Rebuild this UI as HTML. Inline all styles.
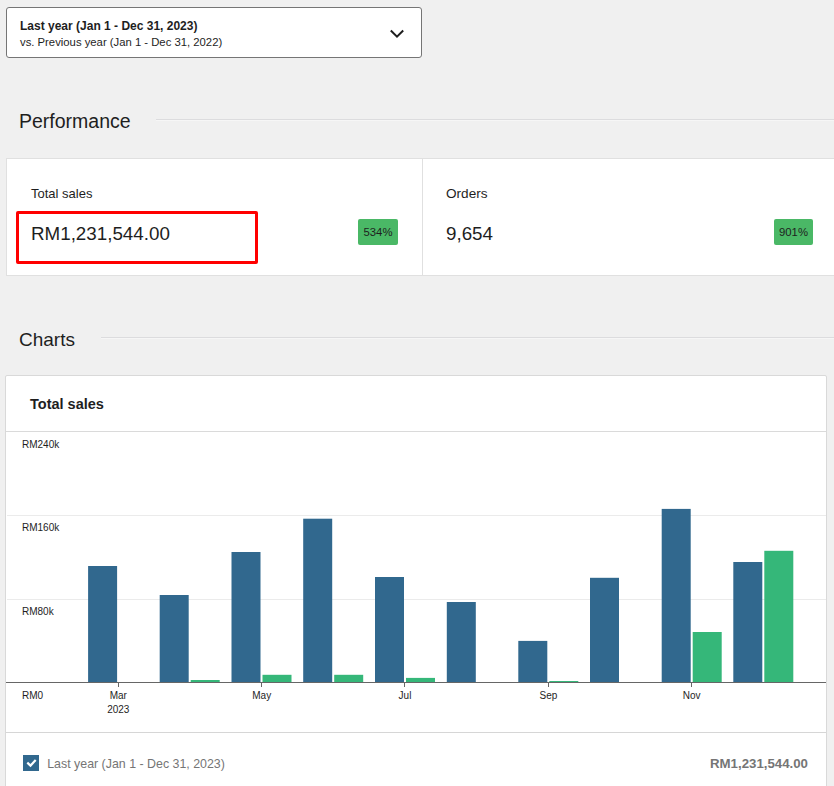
<!DOCTYPE html>
<html><head><meta charset="utf-8">
<style>
html,body{margin:0;padding:0;}
body{width:834px;height:786px;overflow:hidden;background:#f0f0f0;position:relative;font-family:"Liberation Sans",sans-serif;color:#1e1e1e;}
.abs{position:absolute;white-space:nowrap;}
#dd{left:6px;top:7px;width:414px;height:49px;border:1px solid #757575;border-radius:3px;background:#fff;}
.sec{font-size:19px;}
.hr{position:absolute;height:1px;background:#dcdcde;box-shadow:0 1px 0 #f6f6f6;}
#perf{left:6px;top:158px;width:900px;height:116px;border:1px solid #e0e0e0;background:#fff;}
.badge{position:absolute;background:#4ab866;border-radius:2px;height:26px;font-size:11.3px;line-height:27px;text-align:center;color:#1e1e1e;}
#chart{left:5px;top:375px;width:820px;height:500px;border:1px solid #d9d9d9;border-radius:2px;background:#fff;}
.ax{font-size:10px;fill:#1e1e1e;font-family:"Liberation Sans",sans-serif;}
</style></head>
<body>
<div class="abs" id="dd"></div>
<div class="abs" style="left:20px;top:19px;font-size:12px;font-weight:700;">Last year (Jan 1 - Dec 31, 2023)</div>
<div class="abs" style="left:20px;top:35.5px;font-size:11.3px;">vs. Previous year (Jan 1 - Dec 31, 2022)</div>
<svg class="abs" style="left:0;top:0" width="834" height="786">
</svg>
<svg class="abs" style="left:388px;top:26px" width="18" height="14"><path d="M2.8 4.5 L9 10.6 L15.2 4.5" fill="none" stroke="#1e1e1e" stroke-width="2"/></svg>

<div class="abs sec" style="left:19px;top:109.8px;font-size:19.5px;">Performance</div>
<div class="hr" style="left:156px;top:119px;width:700px;"></div>

<div class="abs" id="perf"></div>
<div class="abs" style="left:422px;top:159px;width:1px;height:116px;background:#e0e0e0;"></div>
<div class="abs" style="left:31px;top:185.7px;font-size:13px;">Total sales</div>
<div class="abs" style="left:31px;top:223px;font-size:18.8px;">RM1,231,544.00</div>
<div class="badge" style="left:358px;top:219px;width:40px;">534%</div>
<div class="abs" style="left:16px;top:211px;width:236px;height:47px;border:3px solid #ff0000;border-radius:2px;"></div>
<div class="abs" style="left:446px;top:185.7px;font-size:13.6px;">Orders</div>
<div class="abs" style="left:446px;top:223px;font-size:18.8px;">9,654</div>
<div class="badge" style="left:774px;top:219px;width:39px;">901%</div>

<div class="abs sec" style="left:19px;top:328.5px;">Charts</div>
<div class="hr" style="left:101px;top:337px;width:800px;"></div>

<div class="abs" id="chart"></div>
<div class="abs" style="left:30px;top:395.5px;font-size:14.5px;font-weight:700;">Total sales</div>
<div class="abs" style="left:6px;top:431px;width:820px;height:1px;background:#dadada;"></div>
<svg class="abs" style="left:0;top:0" width="834" height="786">
  <line x1="7" y1="515.5" x2="826" y2="515.5" stroke="#ebebeb"/>
  <line x1="7" y1="599.5" x2="826" y2="599.5" stroke="#ebebeb"/>
  <g fill="#31688e" id="blue"><rect x="88.1" y="566.0" width="29" height="116.0"/><rect x="159.7" y="595.0" width="29" height="87.0"/><rect x="231.5" y="552.0" width="29" height="130.0"/><rect x="303.2" y="518.7" width="29" height="163.3"/><rect x="375.0" y="577.0" width="29" height="105.0"/><rect x="446.8" y="602.0" width="29" height="80.0"/><rect x="518.3" y="640.9" width="29" height="41.1"/><rect x="590.0" y="577.8" width="29" height="104.2"/><rect x="661.7" y="508.9" width="29" height="173.1"/><rect x="733.3" y="562.0" width="29" height="120.0"/></g>
  <g fill="#35b779" id="green"><rect x="190.7" y="680.0" width="29" height="2.0"/><rect x="262.5" y="674.8" width="29" height="7.2"/><rect x="334.2" y="674.8" width="29" height="7.2"/><rect x="406.0" y="677.9" width="29" height="4.1"/><rect x="549.3" y="681.0" width="29" height="1.0"/><rect x="692.7" y="632.0" width="29" height="50.0"/><rect x="764.3" y="550.8" width="29" height="131.2"/></g>
  <line x1="6" y1="682.5" x2="826" y2="682.5" stroke="#666"/>
  <text class="ax" x="22" y="448">RM240k</text>
  <text class="ax" x="22" y="531">RM160k</text>
  <text class="ax" x="22" y="615">RM80k</text>
  <text class="ax" x="22" y="698.5">RM0</text>
  <g stroke="#666" stroke-width="1">
    <line x1="118.5" y1="682" x2="118.5" y2="687"/>
    <line x1="261.5" y1="682" x2="261.5" y2="687"/>
    <line x1="404.5" y1="682" x2="404.5" y2="687"/>
    <line x1="548.5" y1="682" x2="548.5" y2="687"/>
    <line x1="691.5" y1="682" x2="691.5" y2="687"/>
  </g>
  <g class="ax" text-anchor="middle">
    <text x="118.3" y="698.7">Mar</text>
    <text x="118.3" y="712.5">2023</text>
    <text x="261.7" y="698.7">May</text>
    <text x="405" y="698.7">Jul</text>
    <text x="548.5" y="698.7">Sep</text>
    <text x="691.7" y="698.7">Nov</text>
  </g>
</svg>
<div class="abs" style="left:6px;top:732px;width:820px;height:1px;background:#d6d6d6;"></div>
<div class="abs" style="left:23px;top:755px;width:16px;height:16px;background:#31688e;"></div>
<svg class="abs" style="left:23px;top:755px" width="16" height="16"><path d="M4.3 7.6 L7.5 10.6 L12.7 5.0" fill="none" stroke="#fff" stroke-width="2.2"/></svg>
<div class="abs" style="left:47.2px;top:757px;font-size:12.4px;color:#757575;">Last year (Jan 1 - Dec 31, 2023)</div>
<div class="abs" style="left:710px;top:756px;font-size:13.25px;font-weight:700;color:#757575;">RM1,231,544.00</div>
</body></html>
